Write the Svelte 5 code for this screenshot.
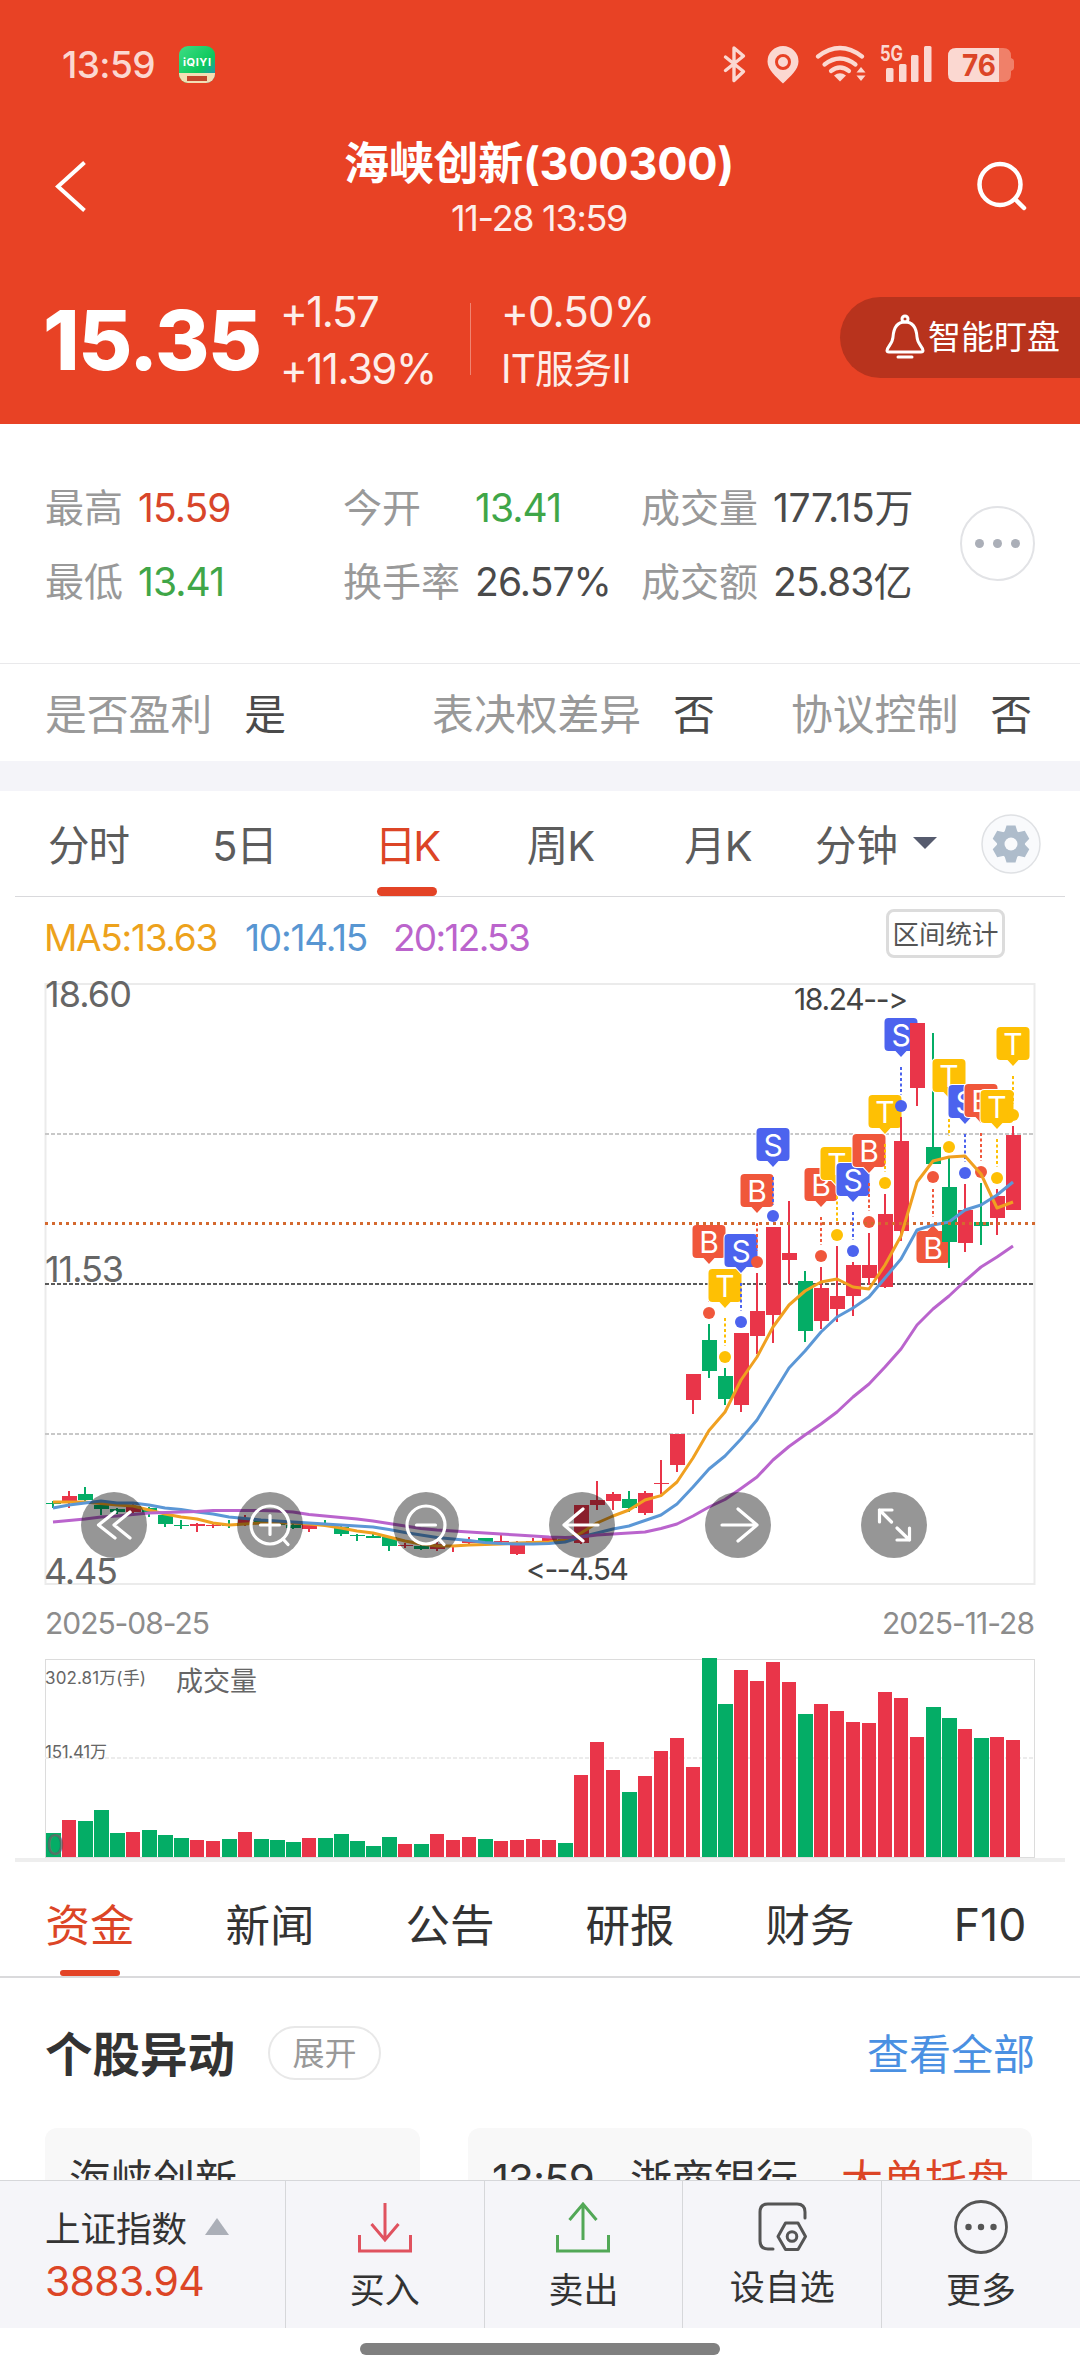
<script>
    const stats = [
        { label: '最高', value: '15.59', tone: 'up' },
        { label: '今开', value: '13.41', tone: 'down' },
        { label: '成交量', value: '177.15万' },
        { label: '最低', value: '13.41', tone: 'down' },
        { label: '换手率', value: '26.57%' },
        { label: '成交额', value: '25.83亿' }
    ];

    const flags = [
        { label: '是否盈利', value: '是' },
        { label: '表决权差异', value: '否' },
        { label: '协议控制', value: '否' }
    ];

    const periods = ['分时', '5日', '日K', '周K', '月K'];
    const sections = ['资金', '新闻', '公告', '研报', '财务', 'F10'];
    let activePeriod = $state('日K');
    let activeSection = $state('资金');

    // color, body top, body bottom, high, low
    const candles = [
        ['g', 1503, 1504, 1501, 1508], ['r', 1496, 1503, 1491, 1508], ['g', 1494, 1500, 1487, 1501],
        ['g', 1505, 1509, 1504, 1515], ['g', 1509, 1512, 1508, 1514], ['r', 1506, 1512, 1504, 1513],
        ['g', 1508, 1513, 1507, 1517], ['g', 1515, 1524, 1514, 1527], ['g', 1525, 1526, 1520, 1529],
        ['r', 1524, 1526, 1523, 1532], ['r', 1525, 1526, 1524, 1528], ['g', 1525, 1526, 1520, 1528],
        ['r', 1519, 1525, 1515, 1526], ['g', 1520, 1522, 1519, 1524], ['g', 1522, 1525, 1521, 1526],
        ['g', 1525, 1528, 1523, 1529], ['r', 1525, 1529, 1524, 1532], ['g', 1525, 1526, 1520, 1527],
        ['g', 1527, 1534, 1526, 1536], ['g', 1535, 1536, 1534, 1541], ['g', 1536, 1538, 1534, 1538],
        ['g', 1537, 1546, 1537, 1551], ['r', 1545, 1546, 1543, 1548], ['g', 1546, 1549, 1545, 1550],
        ['r', 1544, 1549, 1540, 1551], ['r', 1546, 1547, 1546, 1552], ['r', 1540, 1543, 1537, 1544],
        ['g', 1538, 1542, 1538, 1543], ['r', 1541, 1542, 1535, 1543], ['r', 1545, 1554, 1541, 1555],
        ['r', 1541, 1542, 1538, 1542], ['r', 1538, 1541, 1538, 1541], ['g', 1539, 1541, 1538, 1541],
        ['r', 1505, 1543, 1505, 1544], ['r', 1500, 1505, 1481, 1510], ['r', 1494, 1501, 1492, 1510],
        ['g', 1499, 1508, 1491, 1512], ['r', 1493, 1513, 1491, 1515], ['r', 1483, 1484, 1460, 1494],
        ['r', 1434, 1465, 1434, 1472], ['r', 1374, 1400, 1374, 1414], ['g', 1340, 1371, 1324, 1378],
        ['g', 1376, 1399, 1368, 1405], ['r', 1333, 1405, 1333, 1412], ['r', 1311, 1336, 1273, 1354],
        ['r', 1227, 1315, 1227, 1343], ['r', 1253, 1260, 1201, 1284], ['g', 1281, 1331, 1271, 1342],
        ['r', 1288, 1321, 1267, 1329], ['r', 1296, 1309, 1246, 1322], ['r', 1265, 1296, 1262, 1316],
        ['r', 1265, 1278, 1233, 1285], ['r', 1214, 1287, 1194, 1288], ['r', 1141, 1231, 1117, 1241],
        ['r', 1023, 1088, 1023, 1106], ['g', 1147, 1164, 1033, 1164], ['g', 1187, 1242, 1158, 1268],
        ['r', 1210, 1243, 1184, 1252], ['g', 1222, 1226, 1183, 1245], ['r', 1196, 1218, 1189, 1235],
        ['r', 1135, 1210, 1126, 1210]
    ];

    const volumes = [
        24, 37, 36, 47, 24, 25, 27, 22, 19, 17, 16, 18, 25, 18, 17, 15, 19, 19, 23, 16, 11,
        20, 13, 13, 23, 17, 20, 18, 16, 17, 18, 17, 14, 82, 115, 87, 65, 81, 106, 119, 90,
        199, 153, 187, 176, 195, 175, 143, 153, 146, 135, 134, 165, 159, 120, 150, 139, 128,
        119, 120, 117
    ];

    const ma5 = [
        1502, 1502, 1502, 1503.5, 1505, 1506, 1510, 1514, 1517, 1519, 1523, 1525, 1524, 1523, 1523,
        1523, 1524, 1525.5, 1528, 1531, 1533, 1537, 1541, 1544, 1546, 1546, 1545, 1544.5, 1544, 1543,
        1542.5, 1542, 1540, 1533, 1523, 1516, 1510, 1500, 1495.6, 1482, 1458, 1430.5, 1412, 1380, 1357,
        1327, 1305, 1291, 1282, 1279, 1287, 1289, 1265, 1236, 1182, 1161, 1157, 1156, 1174, 1208, 1202
    ];
    const ma10 = [
        1508, 1505, 1503, 1501, 1503, 1503, 1505, 1508, 1509.5, 1512, 1514, 1517, 1518.5, 1520, 1521,
        1522, 1523, 1524, 1525, 1526, 1527, 1529.5, 1532.5, 1535, 1537.5, 1539, 1540.5, 1542.5, 1543.5,
        1544, 1544, 1543.5, 1542, 1537, 1533, 1529, 1526, 1520.5, 1515, 1504, 1487, 1469, 1456, 1439,
        1420, 1394, 1368, 1351, 1332, 1317, 1308, 1297, 1278, 1259, 1230, 1225, 1222, 1210, 1205, 1195, 1182
    ];
    const ma20 = [
        1522, 1520.5, 1519, 1517, 1516, 1514.5, 1513, 1512.5, 1512, 1511.5, 1510.5, 1510.5, 1510.5,
        1510.5, 1511, 1512, 1514.5, 1516, 1517.5, 1519, 1521, 1523.5, 1526, 1528.5, 1530, 1531, 1532,
        1533, 1534, 1535, 1536, 1537, 1537.5, 1537, 1535, 1534, 1533, 1532, 1528.5, 1524, 1516, 1507,
        1499.5, 1488.5, 1477, 1460, 1446.5, 1435, 1424, 1412, 1397, 1384, 1367, 1349, 1325, 1309, 1296,
        1281, 1267, 1257, 1246
    ];

    // candle index -> marker letter and top of its box
    const markers = {
        41: ['B', 1225], 42: ['T', 1269], 43: ['S', 1234], 44: ['B', 1174], 45: ['S', 1128],
        48: ['B', 1168], 49: ['T', 1147], 50: ['S', 1163], 51: ['B', 1134], 52: ['T', 1095],
        53: ['S', 1018], 55: ['B', 1231, true], 56: ['T', 1059], 57: ['S', 1085], 58: ['B', 1084],
        59: ['T', 1090], 60: ['T', 1027]
    };

    const candleColor = { r: '#e93549', g: '#04ad66' };
    const markerColor = { B: '#f0573b', S: '#4c63ee', T: '#fec004' };

    const left = (i) => 46 + 16 * i;
    const center = (i) => 53 + 16 * i;
    const line = (values) => values.map((y, i) => `${center(i)},${y}`).join(' ');
</script>

<div class="page">
    <header>
        <div class="status">
            <span class="clock">13:59</span>
            <svg class="app-icon" width="36" height="37" viewBox="0 0 36 37">
                <defs>
                    <linearGradient id="iq" x1="0" y1="0" x2="1" y2="1">
                        <stop offset="0" stop-color="#3fdc85" />
                        <stop offset=".6" stop-color="#0cc95c" />
                        <stop offset="1" stop-color="#2c7fd0" />
                    </linearGradient>
                    <clipPath id="iqc"><rect width="36" height="37" rx="9" /></clipPath>
                </defs>
                <g clip-path="url(#iqc)">
                    <rect width="36" height="37" fill="url(#iq)" />
                    <rect y="27" width="36" height="10" fill="#f3dfb4" />
                    <rect x="8" y="30" width="20" height="5" fill="#c2472c" />
                    <text x="4" y="20" font-size="11" font-weight="700" fill="#fff" textLength="28">iQIYI</text>
                </g>
            </svg>
            <svg class="signals" width="312" height="52" viewBox="710 38 312 52">
                <g fill="none" stroke="#fbd8d1" stroke-width="3.4" stroke-linecap="round" stroke-linejoin="round">
                    <path d="M725.5 57 L743.5 71.5 L734 80.5 V48 L743.5 56 L725.5 70.5" />
                </g>
                <path d="M783 46 a15.5 15.5 0 0 1 15.5 15.5 c0 8.5-8.5 15-15.5 22 c-7-7-15.5-13.5-15.5-22 a15.5 15.5 0 0 1 15.5-15.5z" fill="#fbd8d1" />
                <circle cx="783" cy="62" r="6.5" fill="#fbd8d1" stroke="#e84225" stroke-width="3" />
                <g fill="none" stroke="#fbd8d1" stroke-width="4.2" stroke-linecap="round">
                    <path d="M818 56.5 Q840 39.5 862 56.5" />
                    <path d="M824.5 64.5 Q840 52.5 855.5 64.5" />
                    <path d="M831 71 Q840 64 849 71" />
                </g>
                <path d="M834 75.5 Q840 71 846 75.5 L840 81.5z" fill="#fbd8d1" />
                <path d="M856.5 72.5 l4.5-5.5 l4.5 5.5z M856.5 75.5 l4.5 5.5 l4.5-5.5z" fill="#fbd8d1" />
                <text x="880" y="61" font-size="21" font-weight="700" fill="#fbd8d1" textLength="23" lengthAdjust="spacingAndGlyphs">5G</text>
                <g fill="#fbd8d1">
                    <rect x="886" y="68" width="7.5" height="14" rx="1.5" />
                    <rect x="899" y="64" width="7.5" height="18" rx="1.5" />
                    <rect x="911" y="55" width="7.5" height="27" rx="1.5" />
                    <rect x="924" y="46" width="7.5" height="36" rx="1.5" />
                </g>
                <path d="M999 48 h4 q8 0 8 8 v2 q3 1 3 3 v7 q0 2 -3 3 v3 q0 8 -8 8 h-4z" fill="#f08069" />
                <path d="M999 48 h-43 q-8 0 -8 8 v18 q0 8 8 8 h43z" fill="#fbd8d1" />
                <text x="962" y="76" font-size="30" font-weight="700" fill="#dc4527" textLength="34" lengthAdjust="spacingAndGlyphs">76</text>
            </svg>
        </div>

        <div class="titlebar">
            <svg width="60" height="60" viewBox="42 156 60 60">
                <path d="M84.5 162.5 L58 186.5 L84.5 210.5" fill="none" stroke="#fff" stroke-width="4" />
            </svg>
            <div class="title">
                <h1>海峡创新(300300)</h1>
                <p>11-28 13:59</p>
            </div>
            <svg width="60" height="60" viewBox="970 156 60 60">
                <circle cx="1000" cy="184.5" r="20.5" fill="none" stroke="#fff" stroke-width="4.5" />
                <path d="M1015 199 L1024 208" stroke="#fff" stroke-width="4.5" stroke-linecap="round" />
            </svg>
        </div>

        <div class="quote">
            <strong>15.35</strong>
            <div class="pair change">
                <span>+1.57</span>
                <span>+11.39%</span>
            </div>
            <div class="pair industry">
                <span>+0.50%</span>
                <span class="sector">IT服务II</span>
            </div>
            <button class="watch">
                <svg width="42" height="48" viewBox="884 313 42 48">
                    <g fill="none" stroke="#fff" stroke-width="3" stroke-linejoin="round" stroke-linecap="round">
                        <circle cx="905" cy="319" r="3" />
                        <path d="M905 322 c-9 0-11.5 8-12 15 c-.3 7-6 10-6 13.5 q0 1.5 2 1.5 h32 q2 0 2-1.5 c0-3.5-5.7-6.5-6-13.5 c-.5-7-3-15-12-15z" />
                        <path d="M898 357 h14" />
                    </g>
                </svg>
                智能盯盘
            </button>
        </div>
    </header>

    <section class="stats">
        <dl>
            {#each stats as stat}
                <div class="stat">
                    <dt>{stat.label}</dt>
                    <dd class={stat.tone}>{stat.value}</dd>
                </div>
            {/each}
        </dl>
        <button class="more" aria-label="more"><i></i><i></i><i></i></button>
    </section>

    <section class="flags">
        {#each flags as flag}
            <div><span>{flag.label}</span><b>{flag.value}</b></div>
        {/each}
    </section>

    <nav class="periods">
        {#each periods as period}
            <button class:active={period === activePeriod} onclick={() => (activePeriod = period)}>{period}</button>
        {/each}
        <button class="minutes">分钟<i></i></button>
        <svg width="60" height="60" viewBox="-30 -30 60 60">
            <circle r="29" fill="#f9fafc" stroke="#dfe1e4" stroke-width="1.5" />
            <g fill="#aebccb">
                <circle r="14" />
                {#each [0, 60, 120, 180, 240, 300] as angle}
                    <path d="M-6.5 -12 L-4.5 -18.5 H4.5 L6.5 -12z" transform="rotate({angle})" />
                {/each}
            </g>
            <circle r="6.5" fill="#f9fafc" />
        </svg>
    </nav>

    <div class="legend">
        <span class="ma5">MA5:13.63</span>
        <span class="ma10">10:14.15</span>
        <span class="ma20">20:12.53</span>
        <button>区间统计</button>
    </div>

    <svg class="kline" width="1080" height="682" viewBox="0 968 1080 682">
        <rect x="45.5" y="984" width="989" height="600" fill="none" stroke="#ebebeb" stroke-width="2" />
        <g stroke-width="2" stroke-dasharray="4 2">
            <path d="M45 1134 H1034" stroke="#c8c8c8" />
            <path d="M45 1284 H1034" stroke="#5a5a5a" />
            <path d="M45 1434 H1034" stroke="#c8c8c8" />
        </g>

        {#each candles as [color, top, bottom, high, low], i}
            <path d="M{center(i)} {high} V{low}" stroke={candleColor[color]} stroke-width="2" />
            <rect x={left(i)} y={top} width="15" height={bottom - top} fill={candleColor[color]} />
            {#if markers[i]}
                {@const [letter, y, below] = markers[i]}
                {@const x = center(i)}
                {@const dot = below ? y - 54 : y + 88}
                <path
                    d={below ? `M${x} ${y - 42} V${y - 14}` : `M${x} ${y + 49} V${y + 77}`}
                    stroke={markerColor[letter]} stroke-width="2" stroke-dasharray="3 2.5" />
                <circle cx={x} cy={dot} r="6" fill={markerColor[letter]} />
                <path
                    d={below
                        ? `M${x - 12.5} ${y} h7 l5.5 -6 l5.5 6 h7 q4 0 4 4 v24 q0 4 -4 4 h-25 q-4 0 -4 -4 v-24 q0 -4 4 -4z`
                        : `M${x - 12.5} ${y} h25 q4 0 4 4 v25 q0 4 -4 4 h-7 l-5.5 6 l-5.5 -6 h-7 q-4 0 -4 -4 v-25 q0 -4 4 -4z`}
                    fill={markerColor[letter]} stroke="#fff" stroke-width="2" paint-order="stroke" />
                <text {x} y={y + 28} class="letter">{letter}</text>
            {/if}
        {/each}

        <g fill="none" stroke-width="3" stroke-linejoin="round">
            <polyline points={line(ma5)} stroke="#f0a020" />
            <polyline points={line(ma10)} stroke="#5b97d6" />
            <polyline points={line(ma20)} stroke="#ba64cd" />
        </g>
        <path d="M45 1223.5 H1037" stroke="#d4692f" stroke-width="3" stroke-dasharray="3 4" />

        <g transform="translate(0 1525)">
            {#each [114, 270, 426, 582, 738, 894] as x}
                <circle cx={x} r="33" fill="#000" opacity=".41" />
            {/each}
            <g fill="none" stroke="#fff" stroke-width="3.2" stroke-linecap="round" stroke-linejoin="round">
                <path d="M115 -13 L98.5 0 L115 13 M130 -13 L114 0 L130 13" />
                <circle cx="270" r="19" />
                <path d="M260.5 0 h19 M270 -9.5 v19 M283 14 l5 5.5" />
                <circle cx="426" r="19" />
                <path d="M416.5 0 h19 M439 14 l5 5.5" />
                <path d="M583 -16 L564 0 L583 16 M564 0 H598" />
                <path d="M738 -16 L757 0 L738 16 M757 0 H722" />
                <path d="M892 -15 H879.5 V-3 M879.5 -15 L891.5 -3 M897 3 L909.5 15 M897 15 H909.5 V3" />
            </g>
        </g>

        <g class="axis">
            <text x="45" y="1007" textLength="87">18.60</text>
            <text x="45" y="1282" textLength="79">11.53</text>
            <text x="44" y="1584" textLength="74">4.45</text>
        </g>
        <g class="extreme">
            <text x="794" y="1010" textLength="114">18.24--&gt;</text>
            <text x="526" y="1580" textLength="103">&lt;--4.54</text>
        </g>
        <g class="date">
            <text x="45" y="1634" textLength="165">2025-08-25</text>
            <text x="882" y="1634" textLength="153">2025-11-28</text>
        </g>
    </svg>

    <svg class="volume" width="1080" height="213" viewBox="0 1650 1080 213">
        <rect x="45.5" y="1659.5" width="989" height="198" fill="none" stroke="#dcdcdc" />
        <path d="M45 1758 H1034" stroke="#ececec" stroke-width="2" stroke-dasharray="4 2" />
        {#each volumes as height, i}
            <rect x={left(i)} y={1857 - height} width={candles[i][0] === 'g' ? 15 : 14} {height} fill={candleColor[candles[i][0]]} />
        {/each}
        <rect x="15" y="1858" width="1050" height="4" fill="#eee" />
        <g fill="#666">
            <text x="45" y="1684" font-size="17" textLength="101">302.81万(手)</text>
            <text x="176" y="1691" font-size="27">成交量</text>
            <text x="45" y="1758" font-size="17" textLength="62">151.41万</text>
            <text x="46" y="1855" font-size="29" opacity=".8">0</text>
        </g>
    </svg>

    <nav class="sections">
        {#each sections as section}
            <button class:active={section === activeSection} onclick={() => (activeSection = section)}>{section}</button>
        {/each}
    </nav>

    <section class="moves">
        <div class="heading">
            <h2>个股异动</h2>
            <button>展开</button>
            <a href="#all">查看全部</a>
        </div>
        <div class="cards">
            <div class="card">海峡创新</div>
            <div class="card wide">
                <span class="time">13:59</span>
                <span>浙商银行</span>
                <span class="event">大单托盘</span>
            </div>
        </div>
    </section>

    <footer>
        <div class="index">
            <span>上证指数<i></i></span>
            <b>3883.94</b>
        </div>
        <button>
            <svg width="60" height="60" viewBox="-30 -30 60 60" fill="none" stroke="#e0525f" stroke-width="3">
                <path d="M0 -24 V13 M-13.5 -3 L0 13 L13.5 -3 M-25.5 8 V24 H25.5 V8" />
            </svg>
            买入
        </button>
        <button>
            <svg width="60" height="60" viewBox="-30 -30 60 60" fill="none" stroke="#52a857" stroke-width="3">
                <path d="M0 13 V-23 M-13.5 -7 L0 -23 L13.5 -7 M-25.5 8 V24 H25.5 V8" />
            </svg>
            卖出
        </button>
        <button class="custom">
            <svg width="60" height="60" viewBox="-30 -30 60 60" fill="none" stroke="#555" stroke-width="3" stroke-linecap="round" stroke-linejoin="round">
                <path d="M23 -9 V-15 Q23 -23 15 -23 H-14 Q-22 -23 -22 -15 V14 Q-22 22 -14 22 H-9" />
                <path d="M-4 9.5 L3.5 -4 H16 L23.5 9.5 L16 22.5 H3.5z" />
                <circle cx="10" cy="9.5" r="4.8" />
            </svg>
            设自选
        </button>
        <button>
            <svg width="60" height="60" viewBox="-30 -30 60 60">
                <circle r="25.5" fill="none" stroke="#555" stroke-width="2.8" />
                <g fill="#555"><circle cx="-12.5" r="3.2" /><circle r="3.2" /><circle cx="12.5" r="3.2" /></g>
            </svg>
            更多
        </button>
    </footer>
    <div class="home"><i></i></div>
</div>

<style>
    :global(body) {
        background: #fff;
    }

    .page {
        width: 1080px;
        height: 2376px;
        overflow: hidden;
        display: flex;
        flex-direction: column;
        font-family: Inter, "Noto Sans CJK SC", sans-serif;
        font-feature-settings: "calt" 0;
        color: #333;
    }
    .page > * {
        flex: none;
    }

    h1, h2, p, dl, dt, dd {
        margin: 0;
        font-weight: 400;
    }
    button {
        padding: 0;
        border: 0;
        background: none;
        font: inherit;
        font-feature-settings: inherit;
        color: inherit;
    }
    svg {
        display: block;
        flex: none;
    }

    header {
        height: 424px;
        background: #e84225;
        color: #fff;
    }
    .status {
        display: flex;
        align-items: center;
        height: 52px;
        padding: 38px 58px 0 62px;
    }
    .clock {
        width: 117px;
        font-size: 37px;
        font-weight: 500;
        letter-spacing: -.6px;
        color: #fbd8d1;
    }
    .signals {
        margin-left: auto;
    }
    .titlebar {
        display: flex;
        justify-content: space-between;
        padding: 38px 50px 0 42px;
        height: 128px;
    }
    .titlebar svg {
        margin-top: 28px;
    }
    .title {
        text-align: center;
        padding-left: 6px;
    }
    h1 {
        font-size: 45px;
        line-height: 72px;
        font-weight: 700;
        letter-spacing: -.3px;
    }
    .title p {
        font-size: 36px;
        line-height: 37px;
        letter-spacing: -1.3px;
        color: #fdeeea;
    }
    .quote {
        display: flex;
        align-items: center;
        height: 120px;
        padding: 21px 0 0 43px;
    }
    .quote strong {
        width: 238px;
        padding-top: 5px;
        font-size: 83px;
        line-height: 100px;
        font-weight: 800;
        letter-spacing: -1.5px;
    }
    .pair {
        display: flex;
        flex-direction: column;
        padding-top: 5px;
        font-size: 42px;
        line-height: 57px;
        letter-spacing: -1.5px;
        color: #fdeeea;
    }
    .change {
        width: 190px;
        margin-left: -1px;
    }
    .industry {
        position: relative;
        box-sizing: border-box;
        padding-left: 31px;
        width: 370px;
        letter-spacing: -.8px;
    }
    .industry::before {
        content: '';
        position: absolute;
        left: 0;
        top: 25px;
        width: 1px;
        height: 72px;
        background: rgba(255, 255, 255, .35);
    }
    .sector {
        font-size: 39px;
        letter-spacing: -.8px;
    }
    .watch {
        display: flex;
        align-items: center;
        width: 240px;
        height: 81px;
        padding-left: 44px;
        border-radius: 41px 0 0 41px;
        box-sizing: border-box;
        background: #b8331d;
        color: #fff;
        font-size: 33px;
        line-height: 44px;
        white-space: nowrap;
        gap: 2px;
    }

    .stats {
        display: flex;
        height: 240px;
        border-bottom: 1px solid #e9e9eb;
        box-sizing: border-box;
    }
    dl {
        display: grid;
        grid-template-columns: 298px 298px 319px;
        grid-auto-rows: 74px;
        padding: 47px 0 0 45px;
    }
    .stat {
        display: flex;
        align-items: center;
        font-size: 39px;
        line-height: 54px;
        white-space: nowrap;
    }
    dt {
        width: 132px;
        color: #999;
    }
    .stat:nth-child(3n + 1) dt {
        width: 93px;
    }
    dd {
        letter-spacing: -.9px;
        color: #4a4a4a;
    }
    .stat:nth-child(3) dd {
        letter-spacing: -.3px;
    }
    .up {
        color: #d8452a;
    }
    .down {
        color: #3fa648;
    }
    .more {
        display: flex;
        align-items: center;
        justify-content: center;
        gap: 9px;
        width: 75px;
        height: 75px;
        margin-top: 82px;
        border: 2px solid #e2e3e6;
        border-radius: 50%;
        box-sizing: border-box;
    }
    .more i {
        width: 9px;
        height: 9px;
        border-radius: 50%;
        background: #abafb8;
    }

    .flags {
        display: flex;
        justify-content: space-between;
        align-items: center;
        height: 93px;
        padding: 4px 48px 0 45px;
        border-bottom: 30px solid #f4f4f9;
        font-size: 41.8px;
        line-height: 60px;
        color: #999;
    }
    .flags div:nth-child(2) {
        margin-left: 70px;
    }
    .flags b {
        margin-left: 32px;
        font-weight: 400;
        color: #4a4a4a;
    }

    .periods {
        display: flex;
        align-items: center;
        height: 105px;
        margin: 0 15px;
        border-bottom: 1px solid #d9d9dc;
        font-size: 41.5px;
        color: #5c5c5c;
    }
    .periods button {
        position: relative;
        width: 147px;
        height: 105px;
        letter-spacing: -1px;
        padding-bottom: 2px;
    }
    .periods button:nth-child(2) {
        width: 165px;
    }
    .periods button:nth-child(3) {
        width: 159px;
        letter-spacing: -3px;
    }
    .periods button:nth-child(4) {
        width: 149px;
    }
    .periods button:nth-child(5) {
        width: 166px;
    }
    .periods .active,
    .sections .active {
        color: #dc4526;
    }
    .periods .active::after,
    .sections .active::after {
        content: '';
        position: absolute;
        left: 50%;
        bottom: 0;
        width: 60px;
        height: 9px;
        margin-left: -30px;
        border-radius: 5px;
        background: #e34326;
    }
    .periods button.minutes {
        display: flex;
        align-items: center;
        gap: 15px;
        width: 180px;
        box-sizing: border-box;
        padding-left: 14px;
        letter-spacing: 0;
    }
    .minutes i {
        border: 12px solid transparent;
        border-top-color: #565b6e;
        border-bottom: 0;
    }

    .legend {
        display: flex;
        align-items: center;
        height: 71px;
        padding: 0 75px 0 44px;
        font-size: 37px;
        letter-spacing: -1.7px;
    }
    .legend span {
        padding-top: 10px;
    }
    .ma5 {
        width: 201px;
        letter-spacing: -1.3px;
        color: #eda21c;
    }
    .ma10 {
        width: 148px;
        letter-spacing: -1.2px;
        color: #5896d2;
    }
    .ma20 {
        color: #bb64cc;
    }
    .legend button {
        width: 119px;
        height: 49px;
        margin-left: auto;
        margin-top: 1px;
        border: 3px solid #dcdcdc;
        border-radius: 8px;
        box-sizing: border-box;
        font-size: 26.5px;
        line-height: 44px;
        letter-spacing: 0;
        white-space: nowrap;
        display: flex;
        justify-content: center;
        color: #555;
    }

    .letter {
        font-size: 30px;
        text-anchor: middle;
        fill: #fff;
    }
    .axis {
        font-size: 36px;
        fill: #666;
    }
    .extreme {
        font-size: 30px;
        fill: #444;
    }
    .date {
        font-size: 30px;
        fill: #8c8c8c;
    }

    .sections {
        display: grid;
        grid-template-columns: repeat(6, 180px);
        height: 113px;
        border-bottom: 2px solid #dadadc;
        font-size: 44.5px;
    }
    .sections button {
        position: relative;
        padding-top: 6px;
    }
    .sections button:last-child {
        padding-top: 11px;
    }
    .sections .active::after {
        height: 6px;
    }

    .moves {
        height: 202px;
        overflow: hidden;
    }
    .heading {
        display: flex;
        align-items: center;
        height: 150px;
        padding: 0 45px;
    }
    h2 {
        width: 223px;
        margin-top: -4px;
        font-size: 47.5px;
        font-weight: 700;
    }
    .heading button {
        width: 113px;
        height: 54px;
        border: 2px solid #e8e8e8;
        border-radius: 27px;
        box-sizing: border-box;
        font-size: 32px;
        line-height: 52px;
        color: #999;
    }
    .heading a {
        margin-left: auto;
        margin-top: -4px;
        font-size: 42px;
        color: #4a90e2;
        text-decoration: none;
    }
    .cards {
        display: flex;
        gap: 48px;
        padding-left: 45px;
        font-size: 42px;
        line-height: 60px;
    }
    .card {
        width: 351px;
        height: 140px;
        padding: 22px 0 0 24px;
        border-radius: 12px 12px 0 0;
        background: #f8f8f8;
    }
    .wide {
        display: flex;
        width: 540px;
        padding-left: 24px;
    }
    .time {
        width: 138px;
        letter-spacing: -1px;
    }
    .event {
        margin-left: 43px;
        color: #dc4526;
    }

    footer {
        display: flex;
        height: 147px;
        border-top: 1px solid #d6d7da;
        background: #f5f5f9;
    }
    .index {
        width: 240px;
        padding: 18px 0 0 45px;
    }
    .index span {
        display: flex;
        align-items: center;
        gap: 18px;
        height: 54px;
        font-size: 35.5px;
    }
    .index i {
        border: 12px solid transparent;
        border-top: 0;
        border-bottom: 17px solid #abafb8;
    }
    .index b {
        display: block;
        font-size: 41px;
        line-height: 57px;
        font-weight: 400;
        letter-spacing: -.7px;
        color: #dc4526;
    }
    footer button {
        display: flex;
        flex-direction: column;
        align-items: center;
        gap: 8px;
        width: 199px;
        padding-top: 16px;
        border-left: 1px solid #d6d7da;
        box-sizing: border-box;
        font-size: 35px;
        line-height: 50px;
        white-space: nowrap;
    }
    footer .custom {
        gap: 5px;
    }

    .home {
        display: flex;
        justify-content: center;
        padding-top: 15px;
    }
    .home i {
        width: 360px;
        height: 12px;
        border-radius: 6px;
        background: #808080;
    }
</style>
